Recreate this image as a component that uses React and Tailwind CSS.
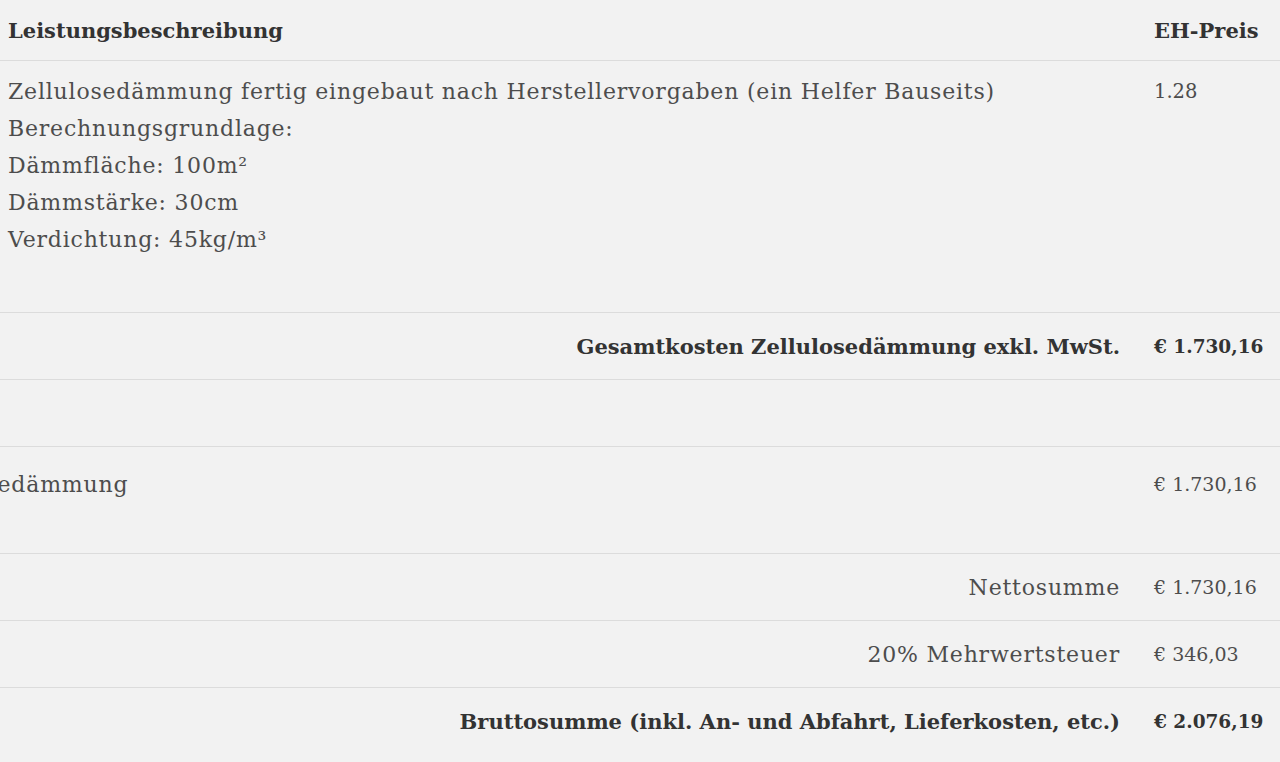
import React from "react";

const font = { fontFamily: '"DejaVu Serif", "Liberation Serif", serif' };

const Row = ({ children, className = "" }) => (
  <div className={`flex border-t border-[#dcdcdc] ${className}`}>{children}</div>
);

const SumRow = ({ label, value, bold }) => (
  <Row className="h-[67px] items-center">
    <div
      className={`flex-1 text-right pr-[26px] ${
        bold
          ? "font-bold text-[#333]"
          : "text-[#4d4d4d] text-[22px] tracking-[0.8px]"
      }`}
    >
      {label}
    </div>
    <div
      className={`w-[134px] pl-2 ${
        bold ? "font-bold text-[#333] text-[18.5px]" : "text-[#4d4d4d] text-[19px]"
      }`}
    >
      {value}
    </div>
  </Row>
);

export default function App() {
  return (
    <div
      className="min-h-[762px] w-[1280px] overflow-hidden bg-[#f2f2f2] text-[21px] leading-[37px]"
      style={font}
    >
      {/* header */}
      <div className="flex h-[60px] items-center font-bold text-[#333]">
        <div className="flex-1 pl-2">Leistungsbeschreibung</div>
        <div className="w-[134px] pl-2">EH-Preis</div>
      </div>

      {/* position */}
      <Row className="h-[252px] pt-3 text-[#4d4d4d]">
        <div className="flex-1 pl-2 text-[22px] tracking-[0.8px] whitespace-nowrap">
          <div>Zellulosedämmung fertig eingebaut nach Herstellervorgaben (ein Helfer Bauseits)</div>
          <div>Berechnungsgrundlage:</div>
          <div>Dämmfläche: 100m²</div>
          <div>Dämmstärke: 30cm</div>
          <div>Verdichtung: 45kg/m³</div>
        </div>
        <div className="w-[134px] pl-2 text-[19.5px]">1.28</div>
      </Row>

      <SumRow label="Gesamtkosten Zellulosedämmung exkl. MwSt." value="€ 1.730,16" bold />

      <Row className="h-[67px]" />

      {/* summary of groups */}
      <Row className="h-[107px] pt-[19px] text-[#4d4d4d]">
        <div className="flex-1 overflow-hidden">
          <div className="ml-[-97px] whitespace-nowrap text-[22px] tracking-[0.8px]">
            Zellulosedämmung
          </div>
        </div>
        <div className="w-[134px] pl-2 text-[19px]">€ 1.730,16</div>
      </Row>

      <SumRow label="Nettosumme" value="€ 1.730,16" />
      <SumRow label="20% Mehrwertsteuer" value="€ 346,03" />
      <SumRow
        label="Bruttosumme (inkl. An- und Abfahrt, Lieferkosten, etc.)"
        value="€ 2.076,19"
        bold
      />
    </div>
  );
}
